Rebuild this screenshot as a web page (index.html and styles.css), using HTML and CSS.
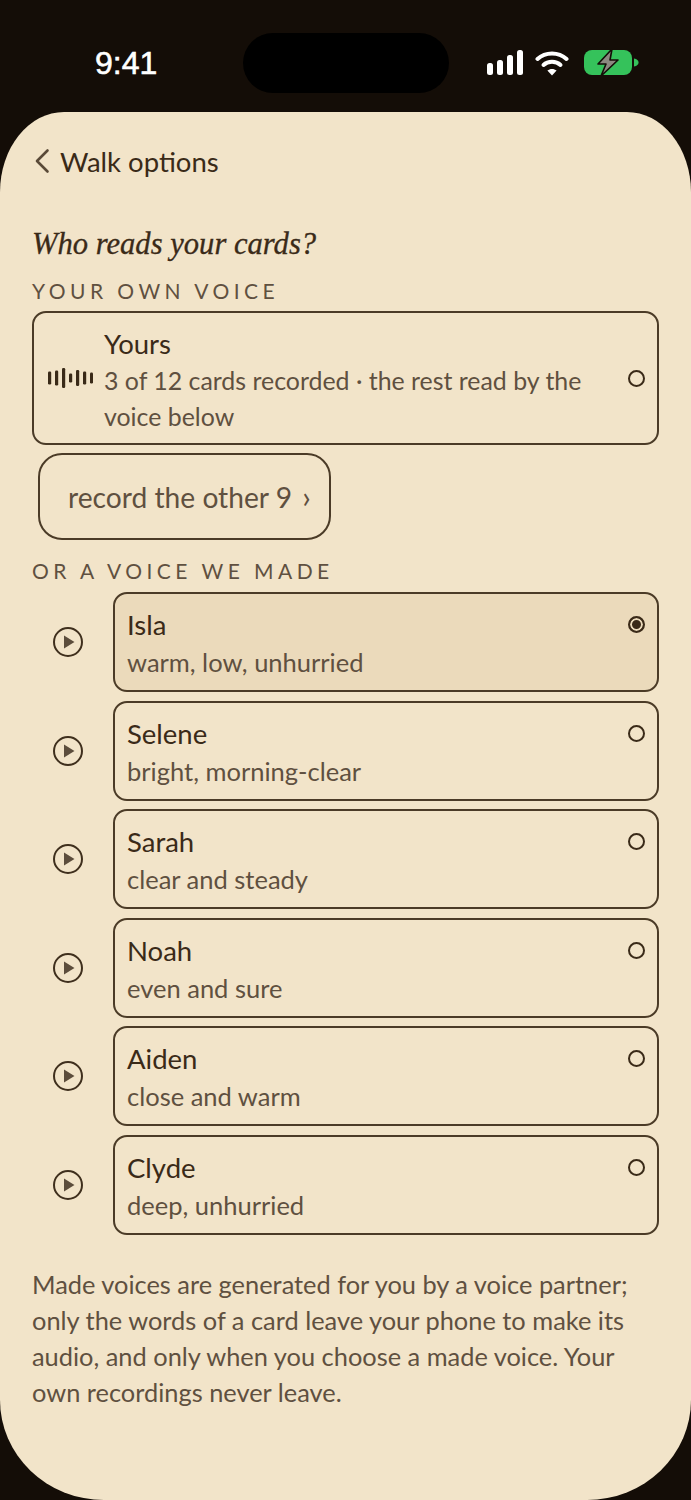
FILE: index.html
```html
<!DOCTYPE html>
<html lang="en">
<head>
    <meta charset="UTF-8">
    <meta name="viewport" content="width=device-width, initial-scale=1.0">
    <title>Walk options</title>
    <link rel="stylesheet" href="styles.css">
</head>
<body>
    <div class="status-bar">
        <div class="time">9:41</div>
        <div class="island"></div>
        <div class="status-icons">
            <svg class="signal" width="38" height="25" viewBox="0 0 38 25" fill="#fff">
                <rect x="1" y="13" width="6" height="12" rx="2.5"/>
                <rect x="11" y="10" width="6" height="15" rx="2.5"/>
                <rect x="21" y="5" width="6" height="20" rx="2.5"/>
                <rect x="31" y="0" width="6" height="25" rx="2.5"/>
            </svg>
            <svg class="wifi" width="34" height="26" viewBox="0 0 34 26" fill="none" stroke="#fff" stroke-width="4" stroke-linecap="round">
                <path d="M2.5 9 C10.5 1.5 23.5 1.5 31.5 9"/>
                <path d="M8.5 15 C13 10.8 21 10.8 25.5 15"/>
                <path d="M17 25.5 L12.4 20.6 C15 18.4 19 18.4 21.6 20.6 Z" fill="#fff" stroke="none"/>
            </svg>
            <svg width="55" height="27" viewBox="0 0 55 27">
                <rect x="0" y="1" width="48" height="25" rx="8" fill="#35c25b"/>
                <path d="M50 9.5 C53 10 54.5 11.5 54.5 13.5 C54.5 15.5 53 17 50 17.5 Z" fill="#35c25b"/>
                <path d="M28 0 L14 15 H22 L17 27 L34 11 H26 Z" fill="#8c8880" stroke="#140d07" stroke-width="1.6" stroke-linejoin="round"/>
            </svg>
        </div>
    </div>

    <div class="sheet">
        <div class="back-row">
            <svg class="back-icon" width="16" height="26" viewBox="0 0 16 26" fill="none" stroke="#5a4a38" stroke-width="2.6" stroke-linecap="round" stroke-linejoin="round">
                <path d="M13.5 2.5 L3 13 L13.5 23.5"/>
            </svg>
            <span class="back-label">Walk options</span>
        </div>

        <h2 class="question">Who reads your cards?</h2>

        <div class="section-label first">YOUR OWN VOICE</div>
        <div class="card card-own">
            <svg class="wave" width="46" height="24" viewBox="0 0 46 24" fill="#3a2a18">
                <rect x="1" y="5.5" width="3.2" height="13" rx="1.2"/>
                <rect x="8" y="4.5" width="3.2" height="15" rx="1.2"/>
                <rect x="15" y="2" width="3.2" height="20" rx="1.2"/>
                <rect x="22" y="7.5" width="3.2" height="9" rx="1.2"/>
                <rect x="29" y="4" width="3.2" height="16" rx="1.2"/>
                <rect x="36" y="5.5" width="3.2" height="13" rx="1.2"/>
                <rect x="43" y="6.5" width="3" height="11" rx="1.2"/>
            </svg>
            <div class="card-text">
                <div class="card-name">Yours</div>
                <div class="card-sub">3 of 12 cards recorded · the rest read by the voice below</div>
            </div>
            <span class="radio radio-own"></span>
        </div>

        <button class="record-btn">record the other 9 <span class="chev">›</span></button>

        <div class="section-label">OR A VOICE WE MADE</div>
        <div class="voice-list">
            <div class="voice-row">
                <svg class="play" width="32" height="32" viewBox="0 0 32 32"><circle cx="16" cy="16" r="14" fill="none" stroke="#3f2f1d" stroke-width="2"/><path d="M12 9.5 L22.5 16 L12 22.5 Z" fill="#5c4d3c"/></svg>
                <div class="card voice-card selected">
                    <div class="card-text">
                        <div class="card-name">Isla</div>
                        <div class="card-sub">warm, low, unhurried</div>
                    </div>
                    <span class="radio on"></span>
                </div>
            </div>
            <div class="voice-row">
                <svg class="play" width="32" height="32" viewBox="0 0 32 32"><circle cx="16" cy="16" r="14" fill="none" stroke="#3f2f1d" stroke-width="2"/><path d="M12 9.5 L22.5 16 L12 22.5 Z" fill="#5c4d3c"/></svg>
                <div class="card voice-card">
                    <div class="card-text">
                        <div class="card-name">Selene</div>
                        <div class="card-sub">bright, morning-clear</div>
                    </div>
                    <span class="radio"></span>
                </div>
            </div>
            <div class="voice-row">
                <svg class="play" width="32" height="32" viewBox="0 0 32 32"><circle cx="16" cy="16" r="14" fill="none" stroke="#3f2f1d" stroke-width="2"/><path d="M12 9.5 L22.5 16 L12 22.5 Z" fill="#5c4d3c"/></svg>
                <div class="card voice-card">
                    <div class="card-text">
                        <div class="card-name">Sarah</div>
                        <div class="card-sub">clear and steady</div>
                    </div>
                    <span class="radio"></span>
                </div>
            </div>
            <div class="voice-row">
                <svg class="play" width="32" height="32" viewBox="0 0 32 32"><circle cx="16" cy="16" r="14" fill="none" stroke="#3f2f1d" stroke-width="2"/><path d="M12 9.5 L22.5 16 L12 22.5 Z" fill="#5c4d3c"/></svg>
                <div class="card voice-card">
                    <div class="card-text">
                        <div class="card-name">Noah</div>
                        <div class="card-sub">even and sure</div>
                    </div>
                    <span class="radio"></span>
                </div>
            </div>
            <div class="voice-row">
                <svg class="play" width="32" height="32" viewBox="0 0 32 32"><circle cx="16" cy="16" r="14" fill="none" stroke="#3f2f1d" stroke-width="2"/><path d="M12 9.5 L22.5 16 L12 22.5 Z" fill="#5c4d3c"/></svg>
                <div class="card voice-card">
                    <div class="card-text">
                        <div class="card-name">Aiden</div>
                        <div class="card-sub">close and warm</div>
                    </div>
                    <span class="radio"></span>
                </div>
            </div>
            <div class="voice-row">
                <svg class="play" width="32" height="32" viewBox="0 0 32 32"><circle cx="16" cy="16" r="14" fill="none" stroke="#3f2f1d" stroke-width="2"/><path d="M12 9.5 L22.5 16 L12 22.5 Z" fill="#5c4d3c"/></svg>
                <div class="card voice-card">
                    <div class="card-text">
                        <div class="card-name">Clyde</div>
                        <div class="card-sub">deep, unhurried</div>
                    </div>
                    <span class="radio"></span>
                </div>
            </div>
        </div>

        <p class="note">Made voices are generated for you by a voice partner; only the words of a card leave your phone to make its audio, and only when you choose a made voice. Your own recordings never leave.</p>
    </div>
</body>
</html>
```

FILE: styles.css
```css
* {
    box-sizing: border-box;
}
html, body {
    margin: 0;
    padding: 0;
}
body {
    width: 691px;
    height: 1500px;
    overflow: hidden;
    background-color: #140d07;
    font-family: Lato, "Noto Sans", sans-serif;
    color: #3a2a18;
}
.status-bar {
    height: 112px;
    position: relative;
    display: flex;
    align-items: flex-start;
    justify-content: space-between;
    padding: 0 52px 0 95px;
}
.time {
    margin-top: 43px;
    font-family: "Liberation Sans", sans-serif;
    font-size: 32px;
    line-height: 40px;
    color: #fff;
    -webkit-text-stroke: 0.6px #fff;
}
.island {
    position: absolute;
    left: 243px;
    top: 33px;
    width: 206px;
    height: 60px;
    border-radius: 30px;
    background-color: #000;
}
.status-icons {
    margin-top: 49px;
    display: flex;
    align-items: center;
}
.signal {
    margin-right: 11px;
}
.wifi {
    margin-right: 15px;
}
.sheet {
    height: 1388px;
    background-color: #f2e4c9;
    border-radius: 64px 64px 104px 104px / 80px 80px 100px 100px;
    padding: 34px 32px 0 32px;
}
.back-row {
    display: flex;
    align-items: center;
    gap: 10px;
    height: 30px;
}
.back-icon {
    margin-left: 2px;
}
.back-label {
    font-size: 27.5px;
    color: #3a2a18;
}
.question {
    margin: 48px 0 0 0;
    font-family: "Liberation Serif", serif;
    font-style: italic;
    font-weight: 400;
    font-size: 30.6px;
    line-height: 40px;
    color: #3a2a18;
    -webkit-text-stroke: 0.3px #3a2a18;
}
.section-label {
    margin-top: 14px;
    height: 28px;
    line-height: 28px;
    font-size: 21px;
    letter-spacing: 4.45px;
    color: #5f5040;
}
.section-label.first {
    margin-top: 13px;
    margin-bottom: 6px;
}
.card {
    display: flex;
    align-items: center;
    border: 2px solid #4b3b27;
    border-radius: 14px;
}
.card-own {
    height: 134px;
    padding: 0 12px 0 13px;
}
.wave {
    flex-shrink: 0;
    margin-right: 11px;
}
.card-text {
    flex: 1;
}
.card-name {
    font-size: 27.5px;
    line-height: 36px;
    color: #3a2a18;
}
.card-sub {
    font-size: 25.5px;
    line-height: 36px;
    color: #5f5040;
}
.card-own .card-text {
    padding-top: 4px;
}
.card-own .card-sub {
    width: 490px;
    font-size: 24.9px;
}
.radio {
    width: 17px;
    height: 17px;
    flex-shrink: 0;
    border: 2.5px solid #3a2a18;
    border-radius: 50%;
}
.record-btn {
    display: block;
    width: 293px;
    height: 87px;
    margin: 8px 0 17px 6px;
    padding: 0 0 2px 28px;
    background: none;
    border: 2px solid #4b3b27;
    border-radius: 24px;
    text-align: left;
    font-family: Lato, "Noto Sans", sans-serif;
    font-size: 28.2px;
    color: #5f5040;
}
.chev {
    margin-left: 3px;
    font-size: 30px;
}
.voice-list {
    margin-top: 7px;
    display: flex;
    flex-direction: column;
    gap: 8.6px;
}
.voice-row {
    display: flex;
    align-items: center;
}
.play {
    margin: 0 29px 0 20px;
    flex-shrink: 0;
}
.voice-card {
    flex: 1;
    height: 100px;
    padding: 0 12px 0 12px;
    align-items: flex-start;
}
.voice-card .card-text {
    padding-top: 11px;
}
.voice-card .card-name {
    line-height: 39px;
}
.voice-card .radio {
    margin-top: 22px;
}
.selected {
    background-color: #ebdabb;
}
.radio.on {
    background-color: #3a2a18;
    box-shadow: inset 0 0 0 2px #ebdabb;
}
.note {
    margin: 31px 0 0 0;
    font-size: 25.4px;
    line-height: 36px;
    color: #5f5040;
}
```
